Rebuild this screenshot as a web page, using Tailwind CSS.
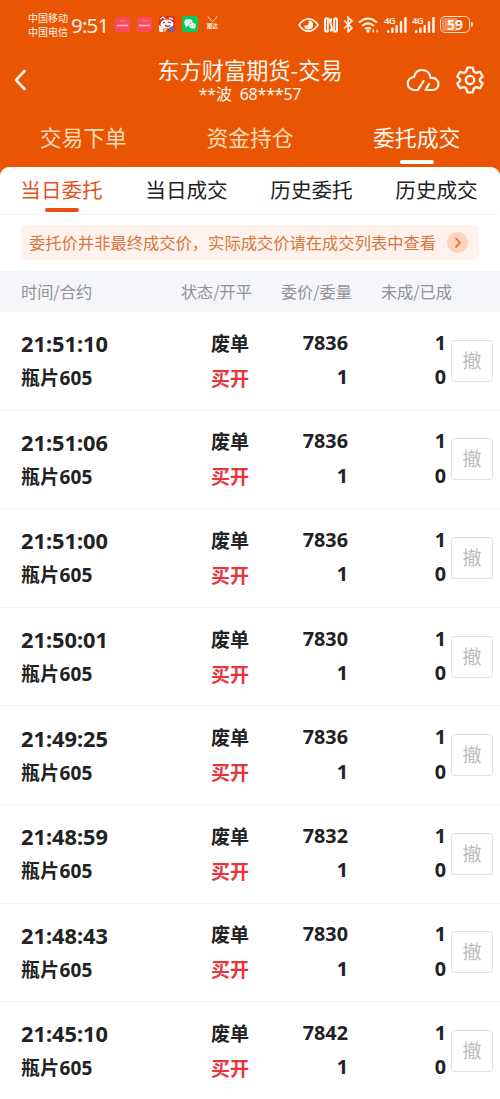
<!DOCTYPE html>
<html lang="zh-CN">
<head>
  <meta charset="UTF-8" />
  <meta name="viewport" content="width=device-width, initial-scale=1" />
  <title>东方财富期货-交易</title>
  <script src="https://cdn.jsdelivr.net/npm/@tailwindcss/browser@4"></script>
</head>
<body class="bg-[#ea5504] h-[1099px] overflow-hidden font-['Noto_Sans','Noto_Sans_CJK_SC',sans-serif] text-[#222]">
  <!-- Status bar -->
  <div class="h-12 flex items-center justify-between pl-7 pr-[27px] text-[#fff3e6]">
    <div class="flex items-center">
      <div class="text-[10px] leading-[14.5px] w-10 pt-[2px] whitespace-nowrap">
        <p>中国移动</p>
        <p>中国电信</p>
      </div>
      <span class="ml-[3px] w-[40px] pt-px text-[20.500px] leading-6 tracking-[-0.8px] whitespace-nowrap">9:51</span>
      <div class="flex items-center gap-[7px] ml-1">
        <svg class="w-[15px] h-[15px]" viewBox="0 0 15 15"><rect width="15" height="15" rx="3" fill="#fa4a60"/><path d="M5 3q2.500 3 5 0" fill="none" stroke="#fc8088"/><path d="M2 8.500h11" stroke="#ffc0c0" stroke-width="1.500"/></svg>
        <svg class="w-[15px] h-[15px]" viewBox="0 0 15 15"><rect width="15" height="15" rx="3" fill="#fa4a60"/><path d="M5 3q2.500 3 5 0" fill="none" stroke="#fc8088"/><path d="M2 8.500h11" stroke="#ffc0c0" stroke-width="1.500"/></svg>
        <svg class="w-[16px] h-[16px]" viewBox="0 0 16 16"><rect width="16" height="16" rx="3" fill="#e62a24"/><ellipse cx="8" cy="8" rx="6.500" ry="4.500" fill="#fff"/><path d="M0 9l5 3-1 4H2q-2 0-2-2z" fill="#fff"/><path d="M1 3l3-2 2 2M10 2l4 1" stroke="#fff" stroke-width="1.300" fill="none"/><path d="M4 7l2-1M9 6l3 1M6 9q3 3 5 0" stroke="#b5202a" stroke-width="1.300" fill="none"/><circle cx="6" cy="14" r="2" fill="#f9b233"/><circle cx="12.500" cy="13" r="2.600" fill="#4678d8"/></svg>
        <svg class="w-[16px] h-[16px]" viewBox="0 0 16 16"><rect width="16" height="16" rx="3" fill="#08c860"/><ellipse cx="6.500" cy="6.600" rx="4.200" ry="3.500" fill="#fff"/><path d="M4 9l-.5 2.300L6 10z" fill="#fff"/><ellipse cx="10.500" cy="9.700" rx="3.600" ry="3" fill="#fff" stroke="#08c860" stroke-width=".6"/><path d="M11 12l2 1v-2z" fill="#fff"/><g fill="#08c860"><circle cx="5.100" cy="5.800" r=".6"/><circle cx="7.900" cy="5.800" r=".6"/><circle cx="9.400" cy="9.200" r=".5"/><circle cx="11.700" cy="9.200" r=".5"/></g></svg>
        <div class="w-[15px] h-4 flex flex-col items-center">
          <svg class="w-[11px] h-[7px] shrink-0" viewBox="0 0 11 7" fill="none" stroke="#ffe2cc"><path d="M1 .5l2 3M10 .5l-2 3M3.500 4q2 3 4 0"/></svg>
          <span class="text-[5.500px] leading-[7px] font-bold whitespace-nowrap">顺达</span>
        </div>
      </div>
    </div>
    <div class="flex items-center pt-px">
      <svg class="w-[21px] h-4" viewBox="0 0 21 16"><path d="M1 8Q5 1.800 10.500 1.800T20 8q-4 6.200-9.500 6.200T1 8z" fill="none" stroke="currentColor" stroke-width="1.700"/><path d="M10.500 3.500a4.500 4.500 0 1 1-4.400 5q2.900.5 4-.8t.4-4.200z" fill="currentColor"/></svg>
      <svg class="w-[14px] h-4 ml-[5px]" viewBox="0 0 14 16" fill="none" stroke="currentColor" stroke-width="2"><path d="M3.800 15V3.500Q3.800 1 5.500 3l3 9.500q1.700 2 1.700 0V1M4.500 1.200H3q-2 0-2 2v9.600q0 2 2 2h.8M10.200 1.200H11q2 0 2 2v9.600q0 2-2 2H9.500M7 1.500v3M7 14.500v-3"/></svg>
      <svg class="w-[11px] h-[17px] ml-[5px]" viewBox="0 0 11 17" fill="none" stroke="currentColor" stroke-width="1.700"><path d="M1 4.500l8 7.500-3.800 3.500v-14L9 5l-8 7.500"/></svg>
      <svg class="w-[21px] h-4 ml-[4px]" viewBox="0 0 21 16" fill="none" stroke="currentColor" stroke-width="2"><path d="M1 5.500q9-8 18 0M4 9q6-5.300 12 0M7 12q3-2.500 6 0"/><circle cx="10" cy="14" r="1.700" fill="currentColor" stroke="none"/><path d="M14 14l2-2v4zM20.500 14l-2-2v4z" fill="currentColor" stroke="none"/></svg>
      <div class="relative w-[23px] h-4 ml-[5px]">
        <svg class="w-[23px] h-4" viewBox="0 0 23 16" fill="currentColor"><rect x="3" y="13" width="2.400" height="3" rx="1"/><rect x="7.200" y="10.500" width="2.400" height="5.500" rx="1"/><rect x="11.500" y="8" width="2.400" height="8" rx="1"/><rect x="15.800" y="4" width="2.400" height="12" rx="1"/><rect x="20.200" y="0" width="2.500" height="16" rx="1"/></svg>
        <span class="absolute left-0 -top-px text-[9.500px] leading-[10px] font-semibold tracking-[-0.8px]">4G</span>
      </div>
      <div class="relative w-[23px] h-4 ml-[5px]">
        <svg class="w-[23px] h-4" viewBox="0 0 23 16" fill="currentColor"><rect x="3" y="13" width="2.400" height="3" rx="1"/><rect x="7.200" y="10.500" width="2.400" height="5.500" rx="1"/><rect x="11.500" y="8" width="2.400" height="8" rx="1"/><rect x="15.800" y="4" width="2.400" height="12" rx="1"/><rect x="20.200" y="0" width="2.500" height="16" rx="1"/></svg>
        <span class="absolute left-0 -top-px text-[9.500px] leading-[10px] font-semibold tracking-[-0.8px]">4G</span>
      </div>
      <div class="ml-[5px] w-[30px] h-[17px] rounded-[5px] border border-[#ffe0c4] p-px">
        <div class="h-full rounded-[3px] bg-linear-to-r from-[#f08a55] from-58% to-transparent to-60% text-[14px] leading-[13px] font-bold text-center">59</div>
      </div>
      <span class="w-[2px] h-[5px] ml-px bg-[#ffe0c4] rounded-r"></span>
    </div>
  </div>

  <!-- Title bar -->
  <header class="h-[66px] flex items-center text-[#fff6ee]">
    <div class="w-[100px] pl-[14px]">
      <svg class="w-3 h-[22px] mt-[-2px]" viewBox="0 0 12 22" fill="none" stroke="currentColor" stroke-width="2.600" stroke-linecap="round" stroke-linejoin="round"><path d="M10.500 2L2 11l8.500 9"/></svg>
    </div>
    <div class="flex-1 text-center">
      <h1 class="text-[22.200px] leading-7 -mt-[3px] font-['Noto_Sans_CJK_SC',sans-serif]">东方财富期货-交易</h1>
      <p class="text-[16px] leading-[22px] whitespace-pre tracking-[-0.2px]">**波  68***57</p>
    </div>
    <div class="w-[100px] flex items-center gap-[16px] pl-[6px]">
      <svg class="w-[34px] h-[24px] -mt-[2px]" viewBox="0 0 34 24" fill="none" stroke="currentColor" stroke-width="2.200" stroke-linecap="round" stroke-linejoin="round"><path d="M12 22H8.500a6.500 6.500 0 0 1-.5-13C9 4.500 12 2 16 2c4.500 0 8 3 8.500 8 4-.7 8 1.800 8 6 0 3.500-2.500 6-6 6h-7l3.500-6M12 22l5.500-9"/></svg>
      <svg class="w-[28px] h-[28px] -mt-[2px]" viewBox="0 0 28 28" fill="none" stroke="currentColor" stroke-width="2.300" stroke-linejoin="round"><path d="M11.300 1.700h5.400l1 3.700 2.500 1.500 3.800-1.100 2.700 4.700-2.800 2.700v1.600l2.800 2.700-2.700 4.700-3.800-1.100-2.500 1.500-1 3.700h-5.400l-1-3.700-2.500-1.500L4 22.200l-2.700-4.700 2.800-2.700v-1.600l-2.800-2.700L4 5.800l3.800 1.100 2.500-1.500z"/><circle cx="14" cy="14" r="4.200"/></svg>
    </div>
  </header>

  <!-- Main tabs -->
  <nav class="h-[53px] grid grid-cols-3 text-center text-[21.800px] leading-[48px] text-[#ffdcb8]">
    <div>交易下单</div>
    <div>资金持仓</div>
    <div class="text-[#fff8f0]">
      <p>委托成交</p>
      <div class="w-[34px] h-1 mx-auto -mt-[2px] rounded-full bg-white"></div>
    </div>
  </nav>

  <main class="bg-white rounded-t-[9px] h-[940px]">
    <!-- Order list tabs -->
    <div class="h-[48px] border-b border-[#f4f4f6] grid grid-cols-4 -ml-px mr-px text-center text-[20.600px] leading-[46px]">
      <div class="text-[#e8501c]">
        <p>当日委托</p>
        <div class="w-[34px] h-1 mx-auto -mt-[5px] rounded-full bg-[#ea4f12]"></div>
      </div>
      <div>当日成交</div>
      <div>历史委托</div>
      <div>历史成交</div>
    </div>

    <!-- Notice -->
    <div class="mt-[10px] mx-[21px] h-[35px] rounded-md bg-[#fff2ec] pl-2 pr-[11px] flex items-center justify-between text-[16.300px] text-[#d5773f] whitespace-nowrap">
      <span class="font-['Noto_Sans_CJK_SC',sans-serif]">委托价并非最终成交价，实际成交价请在成交列表中查看</span>
      <svg class="w-[21px] h-[21px]" viewBox="0 0 21 21"><circle cx="10.500" cy="10.500" r="10.500" fill="#ffd3bd"/><path d="M8.500 6l4.500 4.700-4.500 4.700" fill="none" stroke="#dc6b35" stroke-width="1.600"/></svg>
    </div>

    <div class="mt-[11px] h-[41px] bg-[#f5f6f9] grid grid-cols-[132px_99px_100px_100px] pl-[21px] text-[16.200px] leading-[41px] text-[#929292] whitespace-nowrap font-['Noto_Sans_CJK_SC',sans-serif]">
      <span>时间/合约</span>
      <span class="text-right">状态/开平</span>
      <span class="text-right">委价/委量</span>
      <span class="text-right">未成/已成</span>
    </div>

    <div id="orders"></div>
  </main>

  <script>
    const orders = [
      { time: '21:51:10', price: 7836 },
      { time: '21:51:06', price: 7836 },
      { time: '21:51:00', price: 7836 },
      { time: '21:50:01', price: 7830 },
      { time: '21:49:25', price: 7836 },
      { time: '21:48:59', price: 7832 },
      { time: '21:48:43', price: 7830 },
      { time: '21:45:10', price: 7842 },
    ];

    let html = '';
    orders.forEach(order => {
      html += `
        <div class="h-[98.600px] border-b border-[#f4f4f6] pl-[21px] pr-[7px] flex items-center text-[19px] leading-[35px] font-bold">
          <div class="w-[132px] pt-px">
            <p class="text-[21.800px]">${order.time}</p>
            <p class="tracking-[0.2px]">瓶片605</p>
          </div>
          <div class="w-24 pt-[2px] text-right">
            <p>废单</p>
            <p class="text-[#e8343c]">买开</p>
          </div>
          <div class="w-[99px] pb-px text-right text-[19.800px] leading-[34.500px]">
            <p>${order.price}</p>
            <p>1</p>
          </div>
          <div class="w-[98px] pb-px text-right text-[19.800px] leading-[34.500px]">
            <p>1</p>
            <p>0</p>
          </div>
          <div class="ml-auto w-[42px] h-[42px] rounded-[3px] border border-[#e4e4e4] text-center text-[19px] leading-[41px] font-normal text-[#bcbcbc]">撤</div>
        </div>`;
    });
    document.getElementById('orders').innerHTML = html;
  </script>
</body>
</html>
